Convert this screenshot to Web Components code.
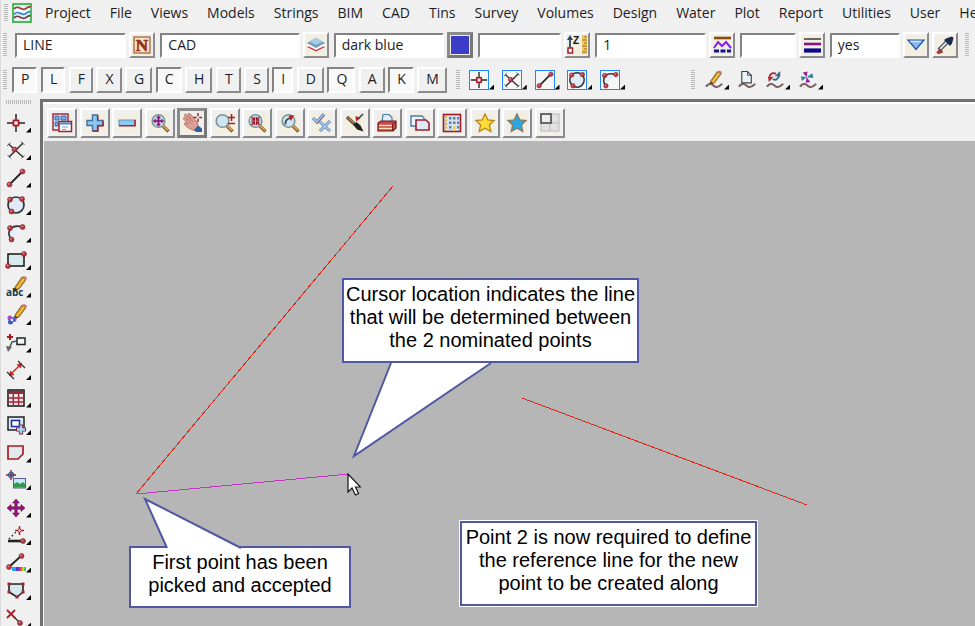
<!DOCTYPE html>
<html lang="en">
<head>
<meta charset="utf-8">
<title>CAD workspace</title>
<style>
html,body{margin:0;height:100%;overflow:hidden}
body{background:#f0f0f0;color:#1c1c24;font-family:"Open Sans","Noto Sans",sans-serif;font-size:14px}
</style>
</head>
<body>
<cad-app></cad-app>
<script>
const ball=(x,y)=>`<circle cx="${x}" cy="${y}" r="2.5" fill="#b03840" stroke="#84262c" stroke-width=".6"/><circle cx="${x-.6}" cy="${y-.7}" r=".9" fill="#e09090"/>`;
const L=(d,c='#222',w=1.5,x='')=>`<path d="${d}" fill="none" stroke="${c}" stroke-width="${w}" ${x}/>`;
const F=(d,c,s='none',w=1)=>`<path d="${d}" fill="${c}" stroke="${s}" stroke-width="${w}"/>`;
const lens='<circle cx="8.5" cy="8" r="6.3" fill="#cfe6f0" stroke="#7894a0" stroke-width="1.6"/>'+L('M13 13L18.500 18.500','#8a5a28',3.2)+L('M13 12.600L18 17.600','#e0b060',1.4);
const wave=L('M1 17C4 13 7 14 9 16S14 18 18 14','#444',2)+L('M1 17C4 13.600 7 14 9 16S14 18 18 14','#c88080',.8);
const pencil=F('M6 11L13 1L17 3.500L10 13L5 15Z','#d99a22','#6b4a12',.8)+L('M8 12L15 3','#f6d268',1.2)+F('M13 1L17 3.500L18 1.500L15 0Z','#d07878')+F('M5 15L6 12L8.500 13.500Z','#222');
const star=(c,s)=>F('M10 1L12.800 7L19 7.600L14.400 12L15.800 18.500L10 15.200L4.200 18.500L5.600 12L1 7.600L7.200 7Z',c,s,1.3);
const circ='<circle cx="10" cy="10" r="8" fill="#dfeaf6" stroke="#333" stroke-width="1.7"/>';
const arrows4=(c)=>F('M10 1L13.500 5H11.200V8.800H15V6.500L19 10L15 13.500V11.200H11.200V15H13.500L10 19L6.500 15H8.800V11.200H5V13.500L1 10L5 6.500V8.800H8.800V5H6.500Z',c,'#7a1420',.6);
const icons={
logo:'<rect x="1" y="1" width="18" height="18" fill="#dff2f4" stroke="#1fae2f" stroke-width="1.6"/>'+L('M2 6C6 1 9 8 13 6S17 3 18.500 4','#a8343c',1.8)+L('M2 8.500C6 4 9 10 13 8.500S17 6 18.500 6.500','#fff',1.5)+L('M2 11.500C6 6 9 13 13 11S17 8 18.500 8.500','#3f86c8',1.8)+L('M2 15C6 10 9 17 13 15S17 12 18.500 13','#7a3b44',1.8),
point:L('M10 1V19M1 10H19')+'<rect x="7.500" y="7.500" width="5" height="5" fill="#fff" stroke="#b01820" stroke-width="1.8"/>',
cross:L('M2.500 4L17 17M17 3L3 17','#333',1.5)+L('M1 6L4.500 2.500M15 1.500L18.500 5M15.500 18.500L18.500 15.500M1.500 15L5 18.500','#555',1)+ball(8.5,9.5),
line:L('M3.500 16.500L16.500 3.500','#222',1.8)+ball(3.5,16.5)+ball(16.5,3.5),
circle:circ+ball(4,4.500)+ball(16,4)+ball(5.500,16.500),
arc:F('M5 16C0 9 4 2 16 4Z','#e6eef8')+L('M5.500 16.500C-.500 9 5 .500 16.500 4','#333',1.7)+ball(4,5)+ball(16.500,4)+ball(5.500,16.500),
rect:'<rect x="2" y="4" width="16" height="12" fill="#d5e9ef" stroke="#222" stroke-width="1.6"/>'+ball(18,4)+ball(2,16),
abc:'<g transform="translate(3,-2)">'+pencil+'</g><text x="0" y="18" font-family="Open Sans,sans-serif" font-weight="700" font-size="10" fill="#203850">abc</text>',
palette:'<g transform="translate(3,-1)">'+pencil+'</g><circle cx="4" cy="13" r="2.500" fill="#aa48c8"/><circle cx="8" cy="14.500" r="2.500" fill="#5a62e0"/><circle cx="4.500" cy="17" r="2.500" fill="#3858c0"/><circle cx="5.800" cy="15" r="1.200" fill="#fff"/>',
leader:L('M1 4H7M4 1V7','#b01820',2)+'<rect x="11" y="5" width="8" height="6.500" fill="#eef6f8" stroke="#222" stroke-width="1.500"/>'+L('M11 8L6 9L3 16','#555',1.5)+F('M0 13L6 14L2 19Z','#666'),
dim:L('M4 15L15 4','#c02828',1.4)+F('M3 16L4 10.500L8.500 15Z','#c02828')+F('M16 3L10.500 4.500L15 8.500Z','#c02828')+L('M1 12L8 19M12 1L19 8','#333',1.3),
table:'<rect x="2" y="2" width="16" height="16" fill="#f6e4e4" stroke="#222" stroke-width="1.6"/>'+F('M3 3H17V6H3Z','#8a3040')+L('M2 10H18M2 14H18M7.300 3V18M12.600 3V18','#a02838',1.4),
viewadd:'<rect x="2" y="2" width="16" height="13" fill="#d6eaf3" stroke="#222" stroke-width="1.500"/><rect x="5.500" y="5.500" width="8" height="6" fill="#fff" stroke="#2028a0" stroke-width="1.500"/>'+L('M15 9.500V19.500M10 14.500H20','#802838',4.200)+L('M15 10.500V18.500M11 14.500H19','#a8d8f8',2.4),
poly:F('M2 3H17V11L12 16H2Z','#dfe9ee','#a81c24',1.7),
image:L('M5 0V10M0 5H10','#882030',1.3)+'<circle cx="5" cy="5" r="2.500" fill="none" stroke="#2b5f9f" stroke-width="1.3"/><rect x="7.500" y="8.500" width="12" height="9.500" fill="#c8e6ff" stroke="#555a9a"/>'+F('M8 17.500V14L11 12L14 14L17 12L19 14V17.500Z','#2f9a48'),
move:arrows4('#8c1490'),
offset:L('M3 14L11 6','#222',1.4,'stroke-dasharray="1.5 2.500"')+L('M2 16H16','#222',2.6)+L('M13.500 1V10M9 5.500H18','#b02028',1.5)+'<circle cx="13.500" cy="5.500" r="1.600" fill="#fff" stroke="#b02028"/>'+ball(17,16),
grad:L('M3 14L15 3','#222',1.8)+ball(3,14)+ball(15.500,3)+F('M6 14H10V18H6Z','#28a0f0')+F('M10 14H13V18H10Z','#6030d0')+F('M13 14H16V18H13Z','#e04060')+F('M16 14H18V18H16Z','#f0c020')+F('M18 14H20V18H18Z','#38d050'),
shield:F('M3 4H17V12L11 17L3 12Z','#d5e9ef','#222',1.6)+F('M1.500 2.500h3v3h-3zM15.500 2.500h3v3h-3zM1.500 10.500h3v3h-3zM15.500 10.500h3v3h-3zM9.500 15.500h3v3h-3z','#a02830'),
del:L('M1 2L9 10M9 2L1 10','#a8202a',1.8)+L('M8 9L13 14','#333',1.4)+ball(14,15),
N:'<rect x="2" y="2" width="16" height="16" fill="#f7e3cf" stroke="#a05a28" stroke-width="1.2"/><text x="10" y="16" text-anchor="middle" font-family="Liberation Serif,serif" font-weight="700" font-size="17" fill="#9a3410" stroke="#9a3410" stroke-width=".7">N</text>',
layers:F('M1 12L10 16.500L19 12L10 8Z','#d83048')+F('M1 10.500L10 15L19 10.500L10 6Z','#fff')+F('M1 8L10 13L19 8L10 3Z','#6f9cc0')+F('M3 6.500L10 10L17 6.500L10 2.500Z','#a8cbe4'),
color:'<rect x="1" y="1" width="18" height="18" fill="#3c3cc8"/>',
z:L('M3 13V3','#2a4860',1.8)+F('M0 5L3 0L6 5Z','#2a4860')+'<rect x="1" y="13" width="4.500" height="5" fill="#fff" stroke="#a02028" stroke-width="1.500"/><text x="6" y="9" font-family="Liberation Sans,sans-serif" font-weight="700" font-size="10" fill="#111">Z</text><rect x="15" y="0" width="5" height="19" fill="#f0c860"/>'+L('M17 2H20M15 5H20M17 8H20M15 11H20M17 14H20M15 17H20','#a07020',1),
zigzag:L('M2 3H19','#8b4a10',2.6)+L('M2 13L6 7L10 11L14 7L19 13','#8020f0',2)+L('M2 16H19','#101890',3,'stroke-dasharray="5 1.500"'),
weights:L('M2 4H19','#444',1.6)+L('M2 9H19','#8c1088',2.6)+L('M2 15.500H19','#08088c',4.200),
drop:F('M2 5H18L10 14.500Z','#86b8f0','#2350b0',1.2)+L('M4 6.500H15','#d0e6fc',1.4),
picker:L('M4 15L12 7','#444',4)+L('M5 14L12 7','#d4e2e8',2)+F('M9 5L15 11L17 8.500L18.500 3L17 1.500L12 3Z','#1d2b50')+L('M2 18C4 15 7 15 7 17L3 18.500','#a02830',1.6),
pen:pencil+wave,
sheet:F('M4 1H10L14 5V13H4Z','#e8f4fa','#444',1.2)+L('M10 1V5H14','#444',1)+wave,
cycle:L('M3.500 6.500C4.500 3 8 2 10.500 3.500','#b02830',2)+L('M14 5C13 9.500 9.500 10.500 7 9','#3a6890',2)+F('M9 6H15V.500Z','#386888')+F('M2 6.500H8L3 12Z','#b02830')+wave,
pinwheel:F('M8 7L4 2L9 1Z','#9820a0')+F('M8 7L14 3L15 8Z','#208890')+F('M8 7L12 12L7 13Z','#9820a0')+F('M8 7L3 11L2 6Z','#208890')+wave,
windows:'<rect x="1" y="1" width="15" height="16" fill="#dcebfa" stroke="#a02030" stroke-width="1.400"/><path d="M3 3h4v4H3zM9 3h5v4H9zM3 9h3v4H3z" fill="#78aee4" stroke="#3b6cb0"/><rect x="7" y="8.500" width="12.500" height="10" fill="#fff" stroke="#a02030" stroke-width="1.500"/>'+L('M8 10.500H19','#4b84c8',2)+L('M10 14H16M10 16.500H14','#7aa4d0',1),
plus:F('M7.500 2H12.500V7.500H18V12.500H12.500V18H7.500V12.500H2V7.500H7.500Z','#8cc8f4','#466f9c',1.4)+L('M12.800 2.500V7.300M18 8V12.800H13V18H8','#9c2838',1.5),
minus:'<rect x="2" y="7" width="16" height="5.500" fill="#8cc8f4" stroke="#6890b8"/>'+L('M18 7V12.800H2','#9c2838',1.6),
zoomall:lens+`<g transform="translate(2.500,2) scale(.6)">${arrows4('#8c1490')}</g>`,
hand:F('M1.500 6C1 4.500 2.500 4 3.500 5L6 7L2.500 2.500C2 1 3.500 .500 4.500 1.500L8.500 6L6 1.500C6 0 7.500 0 8.500 1L14 8C16 10 16 12 16 14L12 17.500C8 16 5 14.500 3 12C1.500 11 2 9.500 3.500 10L6 11Z','#dea095','#a8645c',.8)+L('M8.500 6L11 9M6 7L9 10.500','#a8645c',.7)+F('M12 17L16 12.500L20 15.500V19H14Z','#2f5fa0')+L('M16 0V9M11.500 4.500H20','#9c2030',1.4)+'<circle cx="16" cy="4.500" r="1.300" fill="#fff"/>',
zoompm:'<g transform="translate(-1,0)">'+lens+'</g>'+L('M13 4.500H20M16.500 1V8M13 10.500H20','#a82028',1.6),
zoomin:lens+L('M4.500 4L7 6.500M12.500 4L10 6.500M4.500 12L7 9.500M12.500 12L10 9.500','#a01828',1.3)+L('M7.500 4V7H4.500M9.500 4V7H12.500M7.500 12V9H4.500M9.500 12V9H12.500','#a01828',1.3),
zoomprev:lens+L('M5.500 11.500C5 8 7 6 10 5','#304858',1.8)+F('M8.500 3L14 2L11 8Z','#b02028'),
checks:L('M1 5L5 9L12 1M8 9L18 18M18 8L8 18','#55709c',3)+L('M1 5L5 9L12 1M8 9L18 18M18 8L8 18','#9cc4ee',1.8)+L('M12.500 2.500L5.500 10.500','#9c3848',.8),
brush:L('M2 4L10 11.500','#5e4a38',3.4)+L('M3 4.500L9 10','#b58a58',1.4)+F('M8.500 12L11.500 9L15.500 12.500L18.500 18.500L12 16.500Z','#222')+L('M18 1L13 6','#304858',1.6)+F('M10.500 3L15.500 5L11 8.500Z','#b02028'),
print:F('M5 9L6 1.500H12L15 4.500V9Z','#dceeff','#4d78b0',1.2)+F('M1 10L4 8H19V15L16 18H1Z','#c84844','#741820',1.2)+L('M2 12.500H15M2 15.500H15','#f6e4b4',1.4)+L('M15.500 18V11L19 8.500','#741820',1),
copy:F('M1 3H12L14 5V13H1Z','#f0f7ff','#4d78b0',1.4)+F('M6 7H16L19 10V17H6Z','#dce8f8','#a01c2c',1.6),
building:'<rect x="1.500" y="1.500" width="17" height="17" fill="#d6e4ee" stroke="#a01828" stroke-width="1.600"/>'+L('M4 3V17','#e0b830',2,'stroke-dasharray="2 1.500"')+F('M7 4h2.500v2.500H7zM11 4h2.500v2.500H11zM15 4h2v2.500h-2zM7 8.500h2.500V11H7zM11 8.500h2.500V11H11zM15 8.500h2V11h-2zM7 13h2.500v2.500H7zM15 13h2v2.500h-2z','#5c82a8')+F('M11 13H13.500V18H11Z','#f0d050'),
star:star('#ffdc38','#b48418'),
bluestar:star('#28a8e4','#8c7860'),
panes:'<rect x="1" y="1" width="18" height="17" fill="#e2e2e2" stroke="#bbb"/>'+L('M10 1V18M1 10H19','#bbb',1)+'<rect x="1" y="1" width="10" height="9" fill="#eee" stroke="#555" stroke-width="1.700"/>'
};
function define(name,css,render){
  customElements.define(name,class extends HTMLElement{
    connectedCallback(){
      if(this.shadowRoot)return;
      const root=this.attachShadow({mode:'open'});
      const t=document.createElement('template');
      t.innerHTML=`<style>*{box-sizing:border-box}button,input{font:inherit;color:inherit;margin:0}${css}</style>`+render(this);
      root.append(t.content.cloneNode(true));
    }
  });
}
const at=(e,n)=>e.getAttribute(n)||'';
define('cad-icon',':host{display:block;width:20px;height:20px;flex:none}svg{display:block;width:100%;height:100%;overflow:visible}',
  e=>`<svg viewBox="0 0 20 20" aria-hidden="true">${icons[at(e,'name')]}</svg>`);
define('tool-grip',`:host{display:block;flex:none;width:4px;height:24px;background:repeating-linear-gradient(#b8b8b8 0 1px,#f0f0f0 1px 2px)}
:host([short]){height:20px}:host([across]){width:25px;height:4px;background:repeating-linear-gradient(90deg,#b8b8b8 0 1px,#f0f0f0 1px 2px)}`,()=>'');
define('menu-item',':host{display:block;flex:none}button{display:block;border:0;padding:0;background:none;line-height:20px;white-space:nowrap}',
  ()=>'<button type="button"><slot></slot></button>');
define('menu-bar',':host{display:flex;align-items:center;height:27px;padding:0 0 2px 3px;box-sizing:border-box}nav{display:flex;gap:19px;padding-left:13px}cad-icon{margin-left:4px}tool-grip{height:18px}',
  ()=>'<tool-grip></tool-grip><cad-icon name="logo"></cad-icon><nav aria-label="Main menu"><slot></slot></nav>');
define('tool-field',':host{display:block;min-width:0}input{display:block;width:100%;height:25px;padding:0 0 2px 6px;border:2px solid;border-color:#838383 #fff #fff #838383;border-radius:0;background:#fff;outline:0}',
  e=>`<input type="text" aria-label="${at(e,'label')}" value="${at(e,'value')}">`);
define('push-button',`:host{display:block;flex:none;width:26px}button{display:flex;align-items:center;justify-content:center;width:100%;height:26px;padding:0;border:solid;border-width:2px;border-color:#fff #8b8b8b #8b8b8b #fff;background:#f0f0f0}cad-icon{background:#f2eee0}
:host([large]){width:30px}:host([large]) button{height:30px}
:host([down]) button{border-width:3px;border-color:#8b8b8b #777 #777 #8b8b8b}`,
  e=>`<button type="button" aria-label="${at(e,'label')}"><cad-icon name="${at(e,'icon')}"></cad-icon></button>`);
define('letter-toggle',`:host{display:block;flex:none}button{display:block;height:26px;padding:0 6px 1px 7px;line-height:20px;border:solid;border-width:2px;border-color:#fff #8b8b8b #8b8b8b #fff;background:#f0f0f0}
button[aria-pressed=true]{border-color:#838383 #fff #fff #838383;background:#f8f8f8}`,
  e=>`<button type="button" aria-pressed="${e.hasAttribute('on')}"><slot></slot></button>`);
define('flyout-button',`:host{display:block;flex:none}button{display:flex;align-items:flex-end;border:0;padding:0;background:none}i{width:5px;height:5px;background:#000;clip-path:polygon(100% 0,100% 100%,0 100%)}
:host([framed]) cad-icon{border:1px solid #1e88f0;box-sizing:border-box;background:#f6f6f6}
:host([wave]) cad-icon{width:19px}:host([plain]) i{display:none}`,
  e=>`<button type="button" aria-label="${at(e,'label')}"><cad-icon name="${at(e,'icon')}"></cad-icon><i></i></button>`);
define('call-out',`:host{display:block;position:absolute;border:2px solid #5058a4;background:#fff;color:#000;font:20px/23px "Liberation Sans",Arial,sans-serif;text-align:center;padding:3px 0 9px;white-space:nowrap;box-sizing:border-box}
:host([outlined]){box-shadow:0 0 0 1px #fff}svg{position:absolute;left:-2px;top:-2px;width:1px;height:1px;overflow:visible}`,
  e=>(at(e,'tail')?`<svg aria-hidden="true"><polyline points="${at(e,'tail')}" fill="#fff" stroke="#5058a4" stroke-width="2"/></svg>`:'')+'<slot></slot>');
define('drawing-canvas',`:host{display:block;position:relative;flex:1;min-height:0;overflow:hidden;background:#b6b6b6}
.lines{position:absolute;inset:0;width:100%;height:100%}
.a{left:298px;top:137px;width:297px}.b{left:85px;top:405px;width:222px}.c{left:416px;top:380px;width:297px}
.cursor{position:absolute;left:303px;top:332px;width:14px;height:23px}`,
  ()=>`<svg class="lines" role="img" aria-label="Drawing lines"><g fill="none" stroke-width="1" shape-rendering="crispEdges"><path d="M349 45L92 353M478 257L763 364" stroke="#d82818"/><path d="M92 353L305 333" stroke="#c038c0"/></g></svg>
<call-out class="a" tail="49,85 12,178 149,85">Cursor location indicates the line<br>that will be determined between<br>the 2 nominated points</call-out>
<call-out class="b" tail="38,2 16,-47 112,2">First point has been<br>picked and accepted</call-out>
<call-out class="c" outlined>Point 2 is now required to define<br>the reference line for the new<br>point to be created along</call-out>
<svg class="cursor" viewBox="0 0 14 23" aria-hidden="true"><path d="M1 1V19L5 15L8.500 22L11.500 20.500L8.500 14H13.500Z" fill="#fff" stroke="#111" stroke-width="1.200"/></svg>`);
const btn=(i,l,x='')=>`<push-button icon="${i}" label="${l}" ${x}></push-button>`;
const fly=(i,l,x='')=>`<flyout-button icon="${i}" label="${l}" ${x}></flyout-button>`;
define('attribute-bar',`:host{display:flex;align-items:center;height:36px;padding:0 6px 0 2px;box-sizing:border-box}
div{display:flex;flex:1;align-items:center;gap:3px;padding:0 7px 0 8px}push-button+tool-field{margin-left:2px}tool-field{flex:var(--w) 1 0}`,
  ()=>{const f=(l,v,w)=>`<tool-field label="${l}" value="${v}" style="--w:${w}"></tool-field>`;
  return `<tool-grip></tool-grip><div>${f('Name','LINE',111)}${btn('N','Pick name')}${f('Model','CAD',139)}${btn('layers','Pick model')}${f('Colour','dark blue',110)}${btn('color','Pick colour','down')}${f('Height','',83)}${btn('z','Pick height')}${f('Line style','1',110)}${btn('zigzag','Pick line style')}${f('Weight','',56)}${btn('weights','Pick weight')}${f('Tinable','yes',70)}${btn('drop','Choose tinable')}${btn('picker','Pick attributes')}</div><tool-grip></tool-grip>`});
define('snap-bar',`:host{display:flex;align-items:center;height:33px;padding-left:2px;box-sizing:border-box}
div{display:flex;align-items:center;flex:none}.k{width:435px;justify-content:space-between;margin:0 9px 0 5px}.s{width:156px;justify-content:space-between;margin-left:9px}.p{gap:9px;margin-left:10px}.last{margin-left:66px}`,
  ()=>`<tool-grip short></tool-grip><div class="k">${[...'PLFXGCHTSIDQAKM'].map(c=>`<letter-toggle ${'PLCIQK'.includes(c)?'on':''}>${c}</letter-toggle>`).join('')}</div><tool-grip short></tool-grip><div class="s">${fly('point','Point snap','framed')}${fly('cross','Intersection snap','framed')}${fly('line','Line snap','framed')}${fly('circle','Circle snap','framed')}${fly('arc','Arc snap','framed')}</div><tool-grip class="last" short></tool-grip><div class="p">${fly('pen','Edit string','wave')}${fly('sheet','Copy string','wave plain')}${fly('cycle','Change string','wave')}${fly('pinwheel','String tools','wave')}</div>`);
define('draw-tools',`:host{display:block;flex:none;width:39px;overflow:hidden}tool-grip{margin:1px 0 5px 5px}
flyout-button{display:flex;align-items:center;height:27px;padding-left:5px}flyout-button:nth-of-type(even){height:28px}`,
  ()=>'<tool-grip across></tool-grip>'+['point','cross','line','circle','arc','rect','abc','palette','leader','dim','table','viewadd','poly','image','move','offset','grad','shield','del'].map(n=>fly(n,n+' tool')).join(''));
define('view-toolbar',':host{display:grid;grid-template-columns:repeat(8,33px 32px);flex:none;align-items:center;height:39px;padding-left:4px;background:#f0f0f0;border-top:2px solid #fff;box-sizing:border-box}',
  ()=>['windows','plus','minus','zoomall','hand','zoompm','zoomin','zoomprev','checks','brush','print','copy','building','star','bluestar','panes'].map(n=>btn(n,n,'large'+(n=='hand'?' down':''))).join(''));
define('cad-app',`:host{display:flex;flex-direction:column;height:100vh;box-sizing:border-box;border-left:1px solid #dadada;overflow:hidden}
menu-bar,attribute-bar,snap-bar{flex:none}main{display:flex;flex:1;min-height:0;margin-top:3px}
section{display:flex;flex-direction:column;flex:1;min-width:0;border:solid #6f6f6f;border-width:3px 0 0 3px}drawing-canvas{margin-left:1px}`,
  ()=>`<menu-bar>${'Project File Views Models Strings BIM CAD Tins Survey Volumes Design Water Plot Report Utilities User Help'.split(' ').map(m=>`<menu-item>${m}</menu-item>`).join('')}</menu-bar><attribute-bar></attribute-bar><snap-bar></snap-bar><main><draw-tools></draw-tools><section><view-toolbar></view-toolbar><drawing-canvas></drawing-canvas></section></main>`);
</script>
</body>
</html>
